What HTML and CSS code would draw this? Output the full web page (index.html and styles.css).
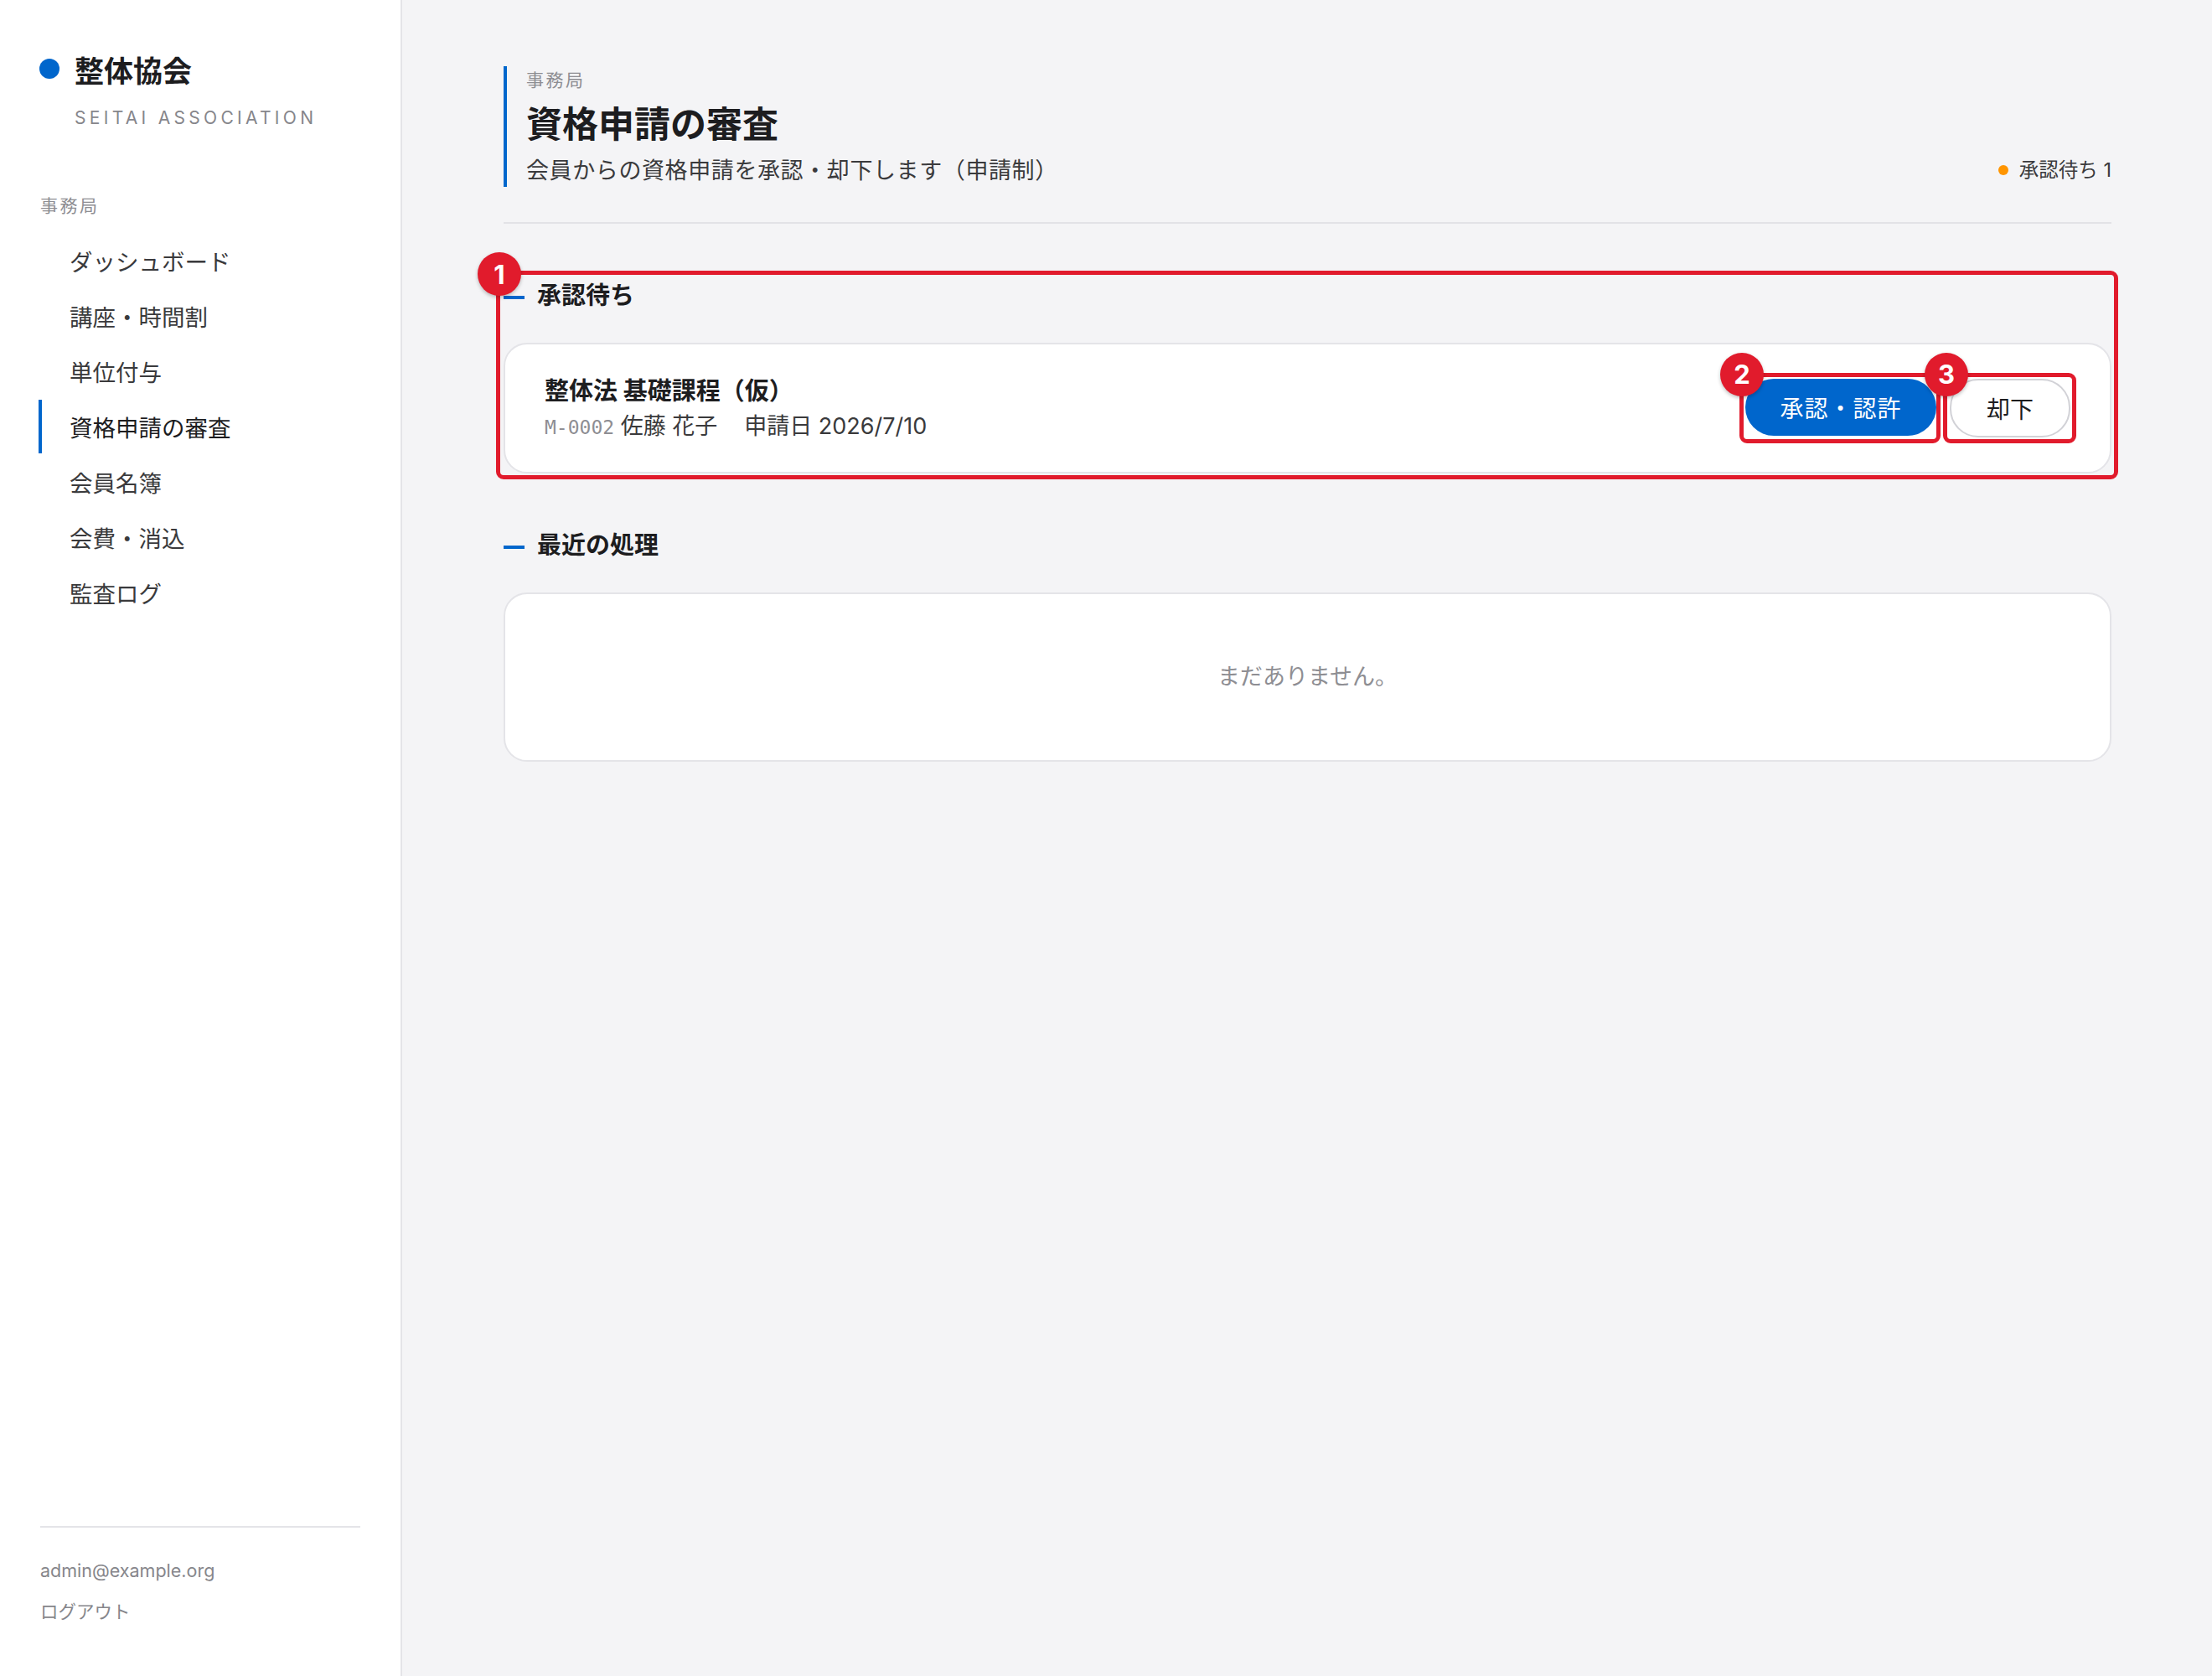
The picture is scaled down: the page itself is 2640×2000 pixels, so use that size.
FILE: index.html
```html
<!doctype html>
<html lang="ja">
  <head>
    <meta charset="utf-8">
    <title>資格申請の審査 - 整体協会</title>
    <link rel="stylesheet" href="styles.css">
  </head>
  <body>
    <div class="app">
      <aside class="sidebar">
        <div class="brand">
          <span class="brand-dot"></span>
          <span class="brand-name">整体協会</span>
        </div>
        <div class="brand-sub">SEITAI ASSOCIATION</div>

        <div class="nav-label">事務局</div>
        <ul class="nav">
          <li class="nav-item">ダッシュボード</li>
          <li class="nav-item">講座・時間割</li>
          <li class="nav-item">単位付与</li>
          <li class="nav-item active">資格申請の審査</li>
          <li class="nav-item">会員名簿</li>
          <li class="nav-item">会費・消込</li>
          <li class="nav-item">監査ログ</li>
        </ul>

        <div class="side-foot">
          <div class="side-user">admin@example.org</div>
          <div class="side-logout">ログアウト</div>
        </div>
      </aside>

      <main class="main">
        <header class="page-head">
          <div class="head-text">
            <div class="head-kicker">事務局</div>
            <h1 class="head-title">資格申請の審査</h1>
            <p class="head-desc">会員からの資格申請を承認・却下します（申請制）</p>
          </div>
          <div class="head-status"><span class="status-dot"></span>承認待ち 1</div>
        </header>

        <section class="block">
          <h2 class="block-title"><span class="dash"></span>承認待ち</h2>
          <div class="card request">
            <div class="req-info">
              <div class="req-title">整体法 基礎課程（仮）</div>
              <div class="req-meta"><span class="mono">M-0002</span> 佐藤 花子<span class="meta-gap"></span>申請日 2026/7/10</div>
            </div>
            <div class="req-actions">
              <span class="marked">
                <button class="btn btn-primary">承認・認許</button>
                <span class="mark-box box-2"></span>
                <span class="mark-num num-btn">2</span>
              </span>
              <span class="marked">
                <button class="btn btn-plain">却下</button>
                <span class="mark-box box-3"></span>
                <span class="mark-num num-btn">3</span>
              </span>
            </div>
          </div>
          <span class="mark-box box-1"></span>
          <span class="mark-num num-1">1</span>
        </section>

        <section class="block">
          <h2 class="block-title"><span class="dash"></span>最近の処理</h2>
          <div class="card empty">まだありません。</div>
        </section>
      </main>
    </div>
  </body>
</html>
```

FILE: styles.css
```css
* {
  margin: 0;
  padding: 0;
  box-sizing: border-box;
}

body {
  font-family: "Inter", "Noto Sans CJK JP", sans-serif;
  color: #1d1d1f;
  background: #f4f4f6;
}

.app {
  display: flex;
  min-height: 2000px;
}

/* sidebar */
.sidebar {
  width: 480px;
  flex-shrink: 0;
  background: #fff;
  border-right: 2px solid #e4e4e8;
  padding: 58px 48px 62px 48px;
  display: flex;
  flex-direction: column;
}

.brand {
  display: flex;
  align-items: center;
  height: 48px;
}

.brand-dot {
  width: 24px;
  height: 24px;
  border-radius: 50%;
  background: #0066cc;
  margin-left: -1px;
  margin-right: 18px;
}

.brand-name {
  font-size: 35px;
  font-weight: 700;
  color: #1d1d1f;
}

.brand-sub {
  margin-top: 20px;
  padding-left: 41px;
  font-size: 21px;
  line-height: 30px;
  letter-spacing: 0.205em;
  color: #86868b;
}

.nav-label {
  margin-top: 75px;
  font-size: 21px;
  line-height: 30px;
  letter-spacing: 0.12em;
  color: #8e8e93;
}

.nav {
  list-style: none;
  margin: 18px 0 0 -2px;
}

.nav-item {
  height: 64px;
  margin-bottom: 2px;
  display: flex;
  align-items: center;
  padding-left: 33px;
  border-left: 4px solid transparent;
  font-size: 27.5px;
  color: #3a3a3c;
}

.nav-item.active {
  border-left-color: #0066cc;
  color: #1d1d1f;
}

.side-foot {
  margin-top: auto;
  border-top: 2px solid #e4e4e8;
  padding-top: 36px;
  font-size: 21.5px;
  color: #86868b;
}

.side-user {
  line-height: 30px;
}

.side-logout {
  margin-top: 19px;
  line-height: 30px;
}

/* main */
.main {
  flex: 1;
  padding: 79px 120px 80px 121px;
}

.page-head {
  display: flex;
  justify-content: space-between;
  align-items: flex-end;
  padding-bottom: 42px;
  border-bottom: 2px solid #e2e2e6;
}

.head-text {
  border-left: 4px solid #0066cc;
  padding: 2px 0 0 23px;
}

.head-kicker {
  font-size: 21px;
  line-height: 30px;
  letter-spacing: 0.12em;
  color: #8e8e93;
}

.head-title {
  margin-top: 9px;
  font-size: 43px;
  line-height: 56px;
  font-weight: 700;
}

.head-desc {
  margin-top: 9px;
  font-size: 27px;
  line-height: 38px;
  letter-spacing: 0.6px;
  color: #3a3a3c;
}

.head-status {
  display: flex;
  align-items: center;
  font-size: 23.5px;
  line-height: 36px;
  color: #3a3a3c;
  margin-bottom: 2px;
}

.status-dot {
  width: 12px;
  height: 12px;
  border-radius: 50%;
  background: #ff9500;
  margin-right: 13px;
}

.block {
  position: relative;
  margin-top: 66px;
}

.block-title {
  display: flex;
  align-items: center;
  font-size: 29px;
  line-height: 40px;
  font-weight: 700;
  margin-bottom: 36px;
  margin-top: 2px;
}

.dash {
  width: 25px;
  height: 4px;
  background: #0066cc;
  margin-right: 15px;
  margin-top: 4px;
}

.card {
  background: #fff;
  border: 2px solid #e4e4e8;
  border-radius: 28px;
}

.request {
  display: flex;
  justify-content: space-between;
  align-items: center;
  padding: 35px 47px 33px 47px;
}

.req-title {
  font-size: 29px;
  line-height: 42px;
  font-weight: 700;
}

.req-meta {
  margin-top: 1px;
  font-size: 27px;
  line-height: 40px;
  color: #3a3a3c;
}

.mono {
  font-family: "DejaVu Sans Mono", "Liberation Mono", monospace;
  font-size: 23px;
  color: #8e8e93;
}

.meta-gap {
  display: inline-block;
  width: 32px;
}

.req-actions {
  display: flex;
  gap: 16px;
  margin-top: -3px;
}

.marked {
  position: relative;
  display: flex;
}

.btn {
  font-family: inherit;
  font-size: 28px;
  height: 68px;
  padding: 0 40px;
  border-radius: 34px;
  cursor: pointer;
}

.btn-primary {
  background: #0066cc;
  color: #fff;
  border: none;
  width: 228px;
  letter-spacing: 1px;
}

.btn-plain {
  background: #fff;
  color: #1d1d1f;
  border: 2px solid #d2d2d7;
  width: 144px;
  height: 70px;
}

.empty {
  padding: 81px 0;
  text-align: center;
  font-size: 27px;
  line-height: 36px;
  color: #8e8e93;
}

/* review annotations */
.mark-box {
  position: absolute;
  border: 5px solid #e11b2c;
  border-radius: 9px;
  pointer-events: none;
}

.box-1 {
  top: -10px;
  left: -9px;
  right: -8px;
  bottom: -7px;
}

.box-2 {
  top: -7px;
  left: -7px;
  right: -5px;
  bottom: -7px;
}

.box-3 {
  top: -7px;
  left: -8px;
  right: -7px;
  bottom: -7px;
}

.mark-num {
  position: absolute;
  width: 52px;
  height: 52px;
  border-radius: 50%;
  background: #e11b2c;
  color: #fff;
  font-family: "Inter", sans-serif;
  font-weight: 700;
  font-size: 31px;
  display: flex;
  align-items: center;
  justify-content: center;
  box-shadow: 0 2px 4px rgba(0, 0, 0, 0.25);
}

.num-1 {
  top: -32px;
  left: -31px;
}

.num-btn {
  top: -31px;
  left: -30px;
}
```
